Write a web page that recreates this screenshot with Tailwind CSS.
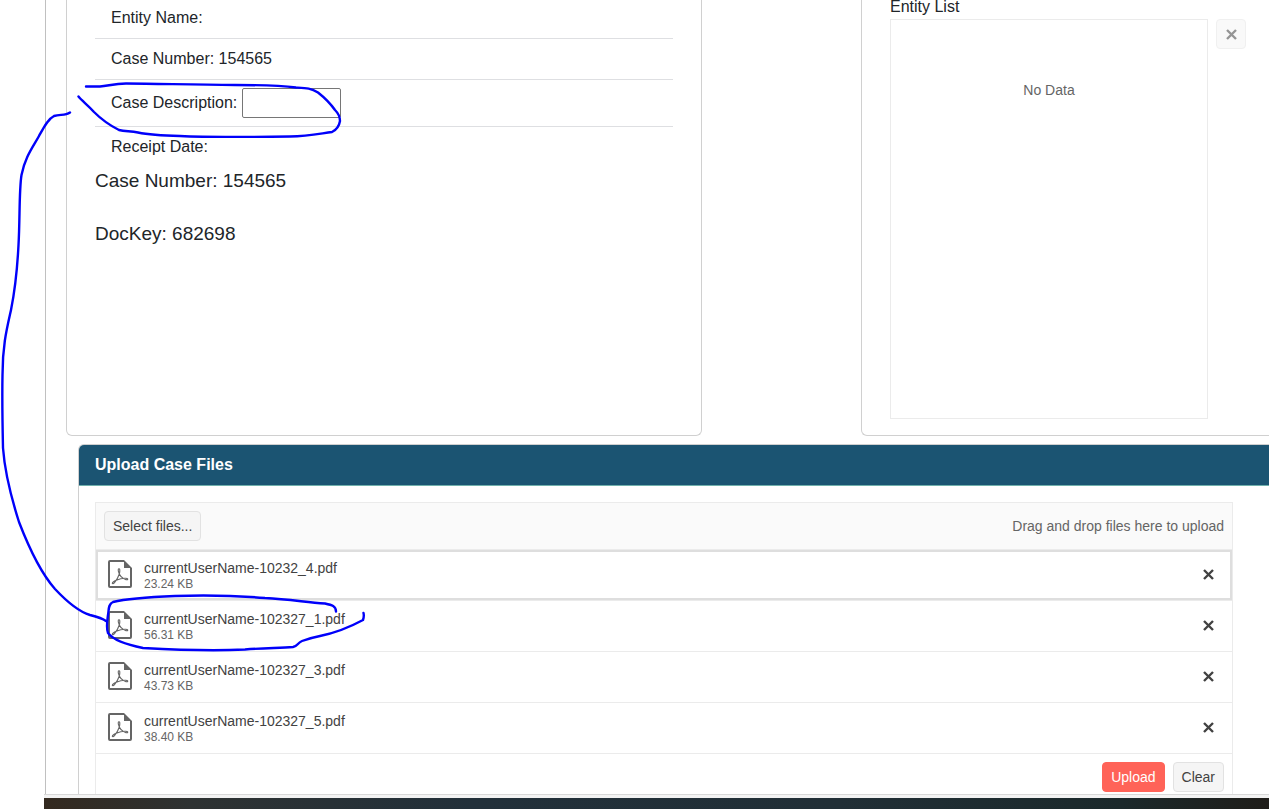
<!doctype html>
<html lang="en">
<head>
  <meta charset="UTF-8" />
  <meta name="viewport" content="width=device-width, initial-scale=1.0" />
  <title>Upload Case Files</title>
  <script src="https://cdn.jsdelivr.net/npm/@tailwindcss/browser@4"></script>
</head>
<body class="relative overflow-x-hidden bg-white font-['Liberation_Sans',Arial,sans-serif] text-base text-[#212529]">

<!-- shared icons -->
<svg class="hidden" xmlns="http://www.w3.org/2000/svg">
  <symbol id="icon-pdf" viewBox="0 0 24 28">
    <path fill="none" stroke="currentColor" stroke-width="2" stroke-linejoin="round" d="M16 1H2a1 1 0 0 0-1 1v24a1 1 0 0 0 1 1h20a1 1 0 0 0 1-1V8" />
    <path fill="currentColor" d="M16 0l8 8h-8z" />
    <path fill="none" stroke="currentColor" stroke-width="1.1" stroke-linejoin="round" stroke-linecap="round" d="M11.300 14C10.300 11.800 9.900 10.300 10.300 9.300C10.600 8.500 11.700 8.700 11.800 9.800C11.900 11 11.700 12.500 11.300 14C10.300 17 8.500 20.300 6.500 22.600C5.600 23.700 4.300 24 4.300 23.200C4.400 22.200 6.300 21 8.300 20.200C11 19.100 14.500 18.300 17 18.200C19 18.100 20 18.700 19.700 19.400C19.300 20.200 17 19.600 15.300 18.400C13.500 17.200 12.100 15.800 11.300 14z" />
  </symbol>
  <symbol id="icon-x" viewBox="0 0 11 11">
    <path fill="none" stroke="currentColor" stroke-width="2.400" d="M1 1l9 9M10 1L1 10" />
  </symbol>
</svg>

<main class="ml-[45px] border-l border-[#c0c0c0]">

  <div class="flex gap-[159px] pl-5">
    <!-- Case details -->
    <section class="flex-1 rounded-b-md border border-t-0 border-[#d0d0d0] px-7">
      <ul>
        <li class="border-b border-[#dedfe2] px-4 pt-1.5 pb-2">Entity Name:</li>
        <li class="border-b border-[#dedfe2] px-4 py-2">Case Number: 154565</li>
        <li class="flex items-center border-b border-[#dedfe2] px-4 py-2">
          <label for="caseDescription">Case Description:</label>
          <input id="caseDescription" type="text" class="ml-[5px] h-[30px] w-[99px] rounded-xs border border-[#767676] px-1">
        </li>
        <li class="px-4 py-2">Receipt Date:</li>
      </ul>
      <p class="mb-[26px] text-[19px] leading-[27px]">Case Number: 154565</p>
      <p class="text-[19px] leading-[27px]">DocKey: 682698</p>
    </section>

    <!-- Entity list -->
    <section class="w-[408px] rounded-bl-md border-b border-l border-[#d0d0d0] pb-4 pl-7">
      <h2 class="mb-1.5 leading-[13px]">Entity List</h2>
      <div class="flex items-start gap-2">
        <div class="h-[400px] w-[318px] border border-[#ebebeb] pt-[60px] text-center text-sm text-[#656565]">No Data</div>
        <button type="button" aria-label="Remove entity" class="flex size-[30px] items-center justify-center rounded-sm border border-[#f0f0f0] bg-[#f9f9f9] text-[#959595]">
          <svg class="size-[11px]"><use href="#icon-x" /></svg>
        </button>
      </div>
    </section>
  </div>

  <!-- Upload -->
  <section class="mt-2 ml-8 rounded-tl-md border-t border-l border-[#d0d0d0]">
    <h2 class="rounded-tl-[5px] border-b border-[#6fb0ac] bg-[#1b5472] px-4 py-2 font-bold text-white">Upload Case Files</h2>
    <div class="pt-4 pr-9 pl-4">
      <div class="border border-b-0 border-[#ebebeb] text-sm text-[#424242]">
        <div class="flex items-center justify-between border-b border-[#ebebeb] bg-[#fafafa] p-2">
          <button type="button" class="h-[30px] rounded-sm border border-[#e2e2e2] bg-[#f5f5f5] px-2">Select files...</button>
          <span class="text-[#656565]">Drag and drop files here to upload</span>
        </div>
        <ul>
          <li class="flex h-[51px] items-center border-b border-[#ebebeb] pr-[18px] pb-0.5 pl-3 inset-ring-2 inset-ring-[#dedede]">
            <svg class="h-7 w-6 text-[#656565]"><use href="#icon-pdf" /></svg>
            <div class="ml-3 flex-1 pt-1">
              <p class="leading-4">currentUserName-10232_4.pdf</p>
              <p class="text-xs leading-4 text-[#656565]">23.24 KB</p>
            </div>
            <button type="button" aria-label="Remove currentUserName-10232_4.pdf"><svg class="size-[11px]"><use href="#icon-x" /></svg></button>
          </li>
          <li class="flex h-[51px] items-center border-b border-[#ebebeb] pr-[18px] pb-0.5 pl-3">
            <svg class="h-7 w-6 text-[#656565]"><use href="#icon-pdf" /></svg>
            <div class="ml-3 flex-1 pt-1">
              <p class="leading-4">currentUserName-102327_1.pdf</p>
              <p class="text-xs leading-4 text-[#656565]">56.31 KB</p>
            </div>
            <button type="button" aria-label="Remove currentUserName-102327_1.pdf"><svg class="size-[11px]"><use href="#icon-x" /></svg></button>
          </li>
          <li class="flex h-[51px] items-center border-b border-[#ebebeb] pr-[18px] pb-0.5 pl-3">
            <svg class="h-7 w-6 text-[#656565]"><use href="#icon-pdf" /></svg>
            <div class="ml-3 flex-1 pt-1">
              <p class="leading-4">currentUserName-102327_3.pdf</p>
              <p class="text-xs leading-4 text-[#656565]">43.73 KB</p>
            </div>
            <button type="button" aria-label="Remove currentUserName-102327_3.pdf"><svg class="size-[11px]"><use href="#icon-x" /></svg></button>
          </li>
          <li class="flex h-[51px] items-center border-b border-[#ebebeb] pr-[18px] pb-0.5 pl-3">
            <svg class="h-7 w-6 text-[#656565]"><use href="#icon-pdf" /></svg>
            <div class="ml-3 flex-1 pt-1">
              <p class="leading-4">currentUserName-102327_5.pdf</p>
              <p class="text-xs leading-4 text-[#656565]">38.40 KB</p>
            </div>
            <button type="button" aria-label="Remove currentUserName-102327_5.pdf"><svg class="size-[11px]"><use href="#icon-x" /></svg></button>
          </li>
        </ul>
        <div class="flex justify-end gap-2 px-2 pt-2 pb-0.5">
          <button type="button" class="h-[30px] rounded-sm border border-[#ff6358] bg-[#ff6358] px-2 text-white">Upload</button>
          <button type="button" class="h-[30px] rounded-sm border border-[#e2e2e2] bg-[#f5f5f5] px-2">Clear</button>
        </div>
      </div>
    </div>
  </section>
</main>

<!-- window edge and desktop strip -->
<footer class="ml-11 border-t border-[#d8d8d8] bg-[#f3f3f3] pt-[3px]">
  <div class="h-[11px] bg-[linear-gradient(to_right,#33291f,#2e3232_12%,#22303a_35%,#212f36_65%,#1b292b_88%,#1f1d19)]"></div>
</footer>

<!-- pen marks -->
<svg class="pointer-events-none absolute top-0 left-0" width="400" height="700" viewBox="0 0 400 700" fill="none" stroke="#0000fa" stroke-width="2.400" stroke-linecap="round" stroke-linejoin="round" xmlns="http://www.w3.org/2000/svg">
  <path d="M86 86.500H100C108 86 114 83.500 126 83.500C160 83.500 190 85 235 85C260 85 280 85.500 296 87.500C306 88 311 88 318 92.500C325 98 330 103 335 110C339 114 340 117 340 121C339 127 336 130 332 132C318 134 308 136.500 290 136.500C250 137 210 137.500 180 136C160 135.500 150 135 138 132.500C130 131 125 131.500 119 130C107 124 100 118 94 112C88 105 82 101 78.500 96.500" />
  <path d="M70 112.500C65 116 60 114 54 116C48 119 44 127 39 136C33 147 25 157 21.500 175C19 190 20 220 18.500 245C17 275 14 295 11 310C7 328 2.500 345 2.500 375C2 400 2.500 425 3 448C5 475 12 500 19 522C29 548 40 572 55 589C70 605 80 612 90 615C98 617 102 618 106 621" />
  <path d="M336 611.500C336 606 332 605 325 603.500C305 602 290 599.500 265 598C235 595.500 205 595 175 596C150 597 125 599 113 602C108 604 109 610 108 615C107 622 106 628 108 633C114 641 128 645 143 648C170 649.500 215 651 245 649.500C265 648 280 648 293 647C298 646 297 643 302 641C310 638 315 637 320 636C335 633 350 627 363 620C364 617 364 615 363.500 613" />
</svg>

</body>
</html>
